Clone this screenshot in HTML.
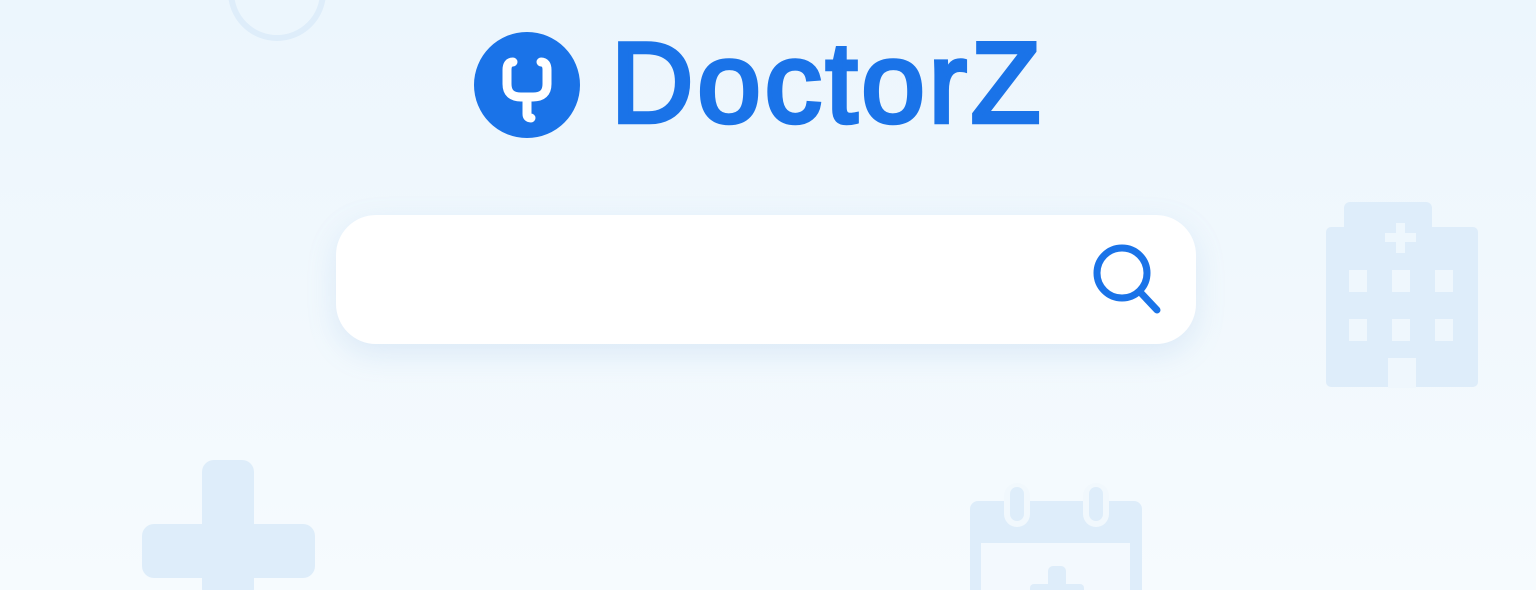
<!DOCTYPE html>
<html><head><style>
html,body{margin:0;padding:0}
body{width:1536px;height:590px;overflow:hidden;position:relative;background:linear-gradient(180deg,#ecf6fd 0%,#f1f8fd 50%,#f6fbfe 100%);font-family:"Liberation Sans",sans-serif}
.abs{position:absolute}
</style></head><body>
<svg class="abs" style="left:0;top:0" width="1536" height="590">
  <circle cx="277" cy="-8" r="46" fill="none" stroke="#deedfa" stroke-width="6"/>
  <rect x="202" y="460" width="52" height="140" rx="12" fill="#deedfa"/>
  <rect x="142" y="524" width="173" height="54" rx="12" fill="#deedfa"/>
  <rect x="1344" y="202" width="88" height="40" rx="6" fill="#deedfa"/>
  <rect x="1326" y="227" width="152" height="160" rx="5" fill="#deedfa"/>
  <rect x="1396" y="223" width="9" height="30" fill="#eef7fd"/>
  <rect x="1385" y="233" width="31" height="9" fill="#eef7fd"/>
  <g fill="#eff7fd">
    <rect x="1349" y="270" width="18" height="22"/><rect x="1392" y="270" width="18" height="22"/><rect x="1435" y="270" width="18" height="22"/>
    <rect x="1349" y="319" width="18" height="22"/><rect x="1392" y="319" width="18" height="22"/><rect x="1435" y="319" width="18" height="22"/>
    <rect x="1388" y="358" width="28" height="30"/>
  </g>
  <rect x="970" y="501" width="172" height="100" rx="8" fill="#deedfa"/>
  <rect x="981" y="543" width="149" height="60" fill="#f3f9fe"/>
  <rect x="1048" y="566" width="18" height="30" rx="5" fill="#deedfa"/>
  <rect x="1030" y="584" width="54" height="14" rx="4" fill="#deedfa"/>
  <rect x="1004" y="483" width="26" height="44" rx="13" fill="#f1f8fd"/>
  <rect x="1083" y="483" width="26" height="44" rx="13" fill="#f1f8fd"/>
  <rect x="1010" y="487" width="14" height="34" rx="7" fill="#deedfa"/>
  <rect x="1089" y="487" width="14" height="34" rx="7" fill="#deedfa"/>
  <circle cx="527" cy="85" r="53" fill="#1a73e8"/>
  <path d="M513 62 Q507 62 507 70 V84 Q507 97 521 97 H533 Q547 97 547 84 V70 Q547 62 541 62" fill="none" stroke="#fff" stroke-width="9" stroke-linecap="round"/>
  <path d="M527 97 V114 Q527 118 531 118" fill="none" stroke="#fff" stroke-width="9" stroke-linecap="round"/>
</svg>
<div class="abs" style="left:336px;top:215px;width:860px;height:129px;border-radius:40px;background:#fff;box-shadow:0 10px 30px rgba(120,170,220,0.18)"></div>
<svg class="abs" style="left:0;top:0" width="1536" height="590">
  <circle cx="1122" cy="273" r="25" fill="none" stroke="#1a73e8" stroke-width="7"/>
  <line x1="1141" y1="293" x2="1157" y2="310" stroke="#1a73e8" stroke-width="7" stroke-linecap="round"/>
</svg>
<div class="abs" style="left:611px;top:24px;font-size:114px;font-weight:normal;color:#1a73e8;-webkit-text-stroke:4.5px #1a73e8;letter-spacing:4px;line-height:120px">DoctorZ</div>
</body></html>
